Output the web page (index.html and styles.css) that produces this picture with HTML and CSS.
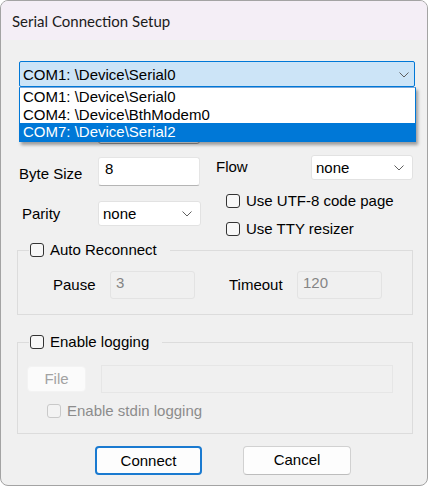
FILE: index.html
```html
<!DOCTYPE html>
<html>
<head>
<meta charset="utf-8">
<link rel="stylesheet" href="styles.css">
</head>
<body>
<div class="window">
  <div class="titlebar">Serial Connection Setup</div>
  <div class="content">
    <div class="combo combo-port">
      <span class="combo-text">COM1: \Device\Serial0</span>
      <svg class="chev" width="10" height="6" viewBox="0 0 10 6"><path d="M0.5 0.5 L5 5 L9.5 0.5" fill="none" stroke="#5f5f5f" stroke-width="1"/></svg>
    </div>
    <ul class="dropdown">
      <li>COM1: \Device\Serial0</li>
      <li>COM4: \Device\BthModem0</li>
      <li class="selected">COM7: \Device\Serial2</li>
    </ul>
    <div class="row-baud">
      <div class="combo combo-baud"></div>
    </div>
    <div class="settings">
      <div class="col-left">
        <div class="field field-byte">
          <span class="label label-byte">Byte Size</span>
          <div class="textbox">8</div>
        </div>
        <div class="field field-parity">
          <span class="label label-parity">Parity</span>
          <div class="combo combo-small">
            <span class="combo-text">none</span>
            <svg class="chev" width="10" height="6" viewBox="0 0 10 6"><path d="M0.5 0.5 L5 5 L9.5 0.5" fill="none" stroke="#5f5f5f" stroke-width="1"/></svg>
          </div>
        </div>
      </div>
      <div class="col-right">
        <div class="field field-flow">
          <span class="label label-flow">Flow</span>
          <div class="combo combo-small combo-flow">
            <span class="combo-text">none</span>
            <svg class="chev" width="10" height="6" viewBox="0 0 10 6"><path d="M0.5 0.5 L5 5 L9.5 0.5" fill="none" stroke="#5f5f5f" stroke-width="1"/></svg>
          </div>
        </div>
        <div class="check check-utf"><span class="box"></span><span>Use UTF-8 code page</span></div>
        <div class="check check-tty"><span class="box"></span><span>Use TTY resizer</span></div>
      </div>
    </div>
    <fieldset class="group group-reconnect">
      <legend><span class="check"><span class="box"></span><span>Auto Reconnect</span></span></legend>
      <div class="pause-row">
        <span class="label label-pause">Pause</span>
        <div class="textbox disabled">3</div>
        <span class="label label-timeout">Timeout</span>
        <div class="textbox disabled">120</div>
      </div>
    </fieldset>
    <fieldset class="group group-logging">
      <legend><span class="check"><span class="box"></span><span>Enable logging</span></span></legend>
      <div class="file-row">
        <div class="btn-file">File</div>
        <div class="path-field"></div>
      </div>
      <div class="check check-stdin disabled"><span class="box"></span><span>Enable stdin logging</span></div>
    </fieldset>
    <div class="buttons">
      <div class="btn btn-primary">Connect</div>
      <div class="btn btn-cancel">Cancel</div>
    </div>
  </div>
</div>
</body>
</html>
```
FILE: styles.css
```css
* { box-sizing: border-box; }
html, body {
  margin: 0;
  padding: 0;
  background: #ffffff;
}
body {
  font-family: "Liberation Sans", Arial, sans-serif;
  font-size: 15px;
  color: #000;
}
.window {
  width: 428px;
  height: 486px;
  border: 1px solid #a3a3a3;
  border-radius: 8px;
  background: #f0f0f0;
  overflow: hidden;
  display: flex;
  flex-direction: column;
}
.titlebar {
  height: 39px;
  background: #f4eef6;
  font-family: "Segoe UI", Lato, "Noto Sans", sans-serif;
  font-size: 15px;
  color: #1b1b1b;
  padding: 11px 0 0 11px;
  line-height: 18px;
}
.content {
  position: relative;
  flex: 1;
  padding: 0 0 0 16px;
}
.combo {
  position: relative;
  height: 26px;
  background: #fff;
  border: 1px solid #e2e2e2;
  border-radius: 3px;
  display: flex;
  align-items: center;
  line-height: 18px;
}
.combo-text { padding-left: 4px; }
.chev {
  position: absolute;
  right: 7px;
  top: 10px;
}
.combo-port {
  margin: 21px 0 0 2px;
  width: 396px;
  background: #cce4f7;
  border: 1px solid #0078d7;
  border-radius: 2px;
}
.combo-port .combo-text { padding-left: 3px; padding-top: 1px; }
.combo-port .chev { right: 5px; top: 10px; }
.dropdown {
  position: absolute;
  top: 47px;
  left: 18px;
  width: 397px;
  height: 55px;
  margin: 0;
  padding: 0;
  list-style: none;
  background: #fff;
  border: 1px solid #0078d7;
  border-top: 1px solid #7aa9dc;
  box-shadow: 2px 3px 3px rgba(0, 0, 0, 0.35);
  z-index: 2;
}
.dropdown li {
  height: 17.7px;
  line-height: 17px;
  padding-left: 3px;
  white-space: nowrap;
}
.dropdown li.selected {
  background: #0078d7;
  color: #fff;
  margin: 0 -1px;
  padding-left: 4px;
}
.row-baud {
  margin-top: 31px;
  padding-left: 81px;
}
.combo-baud { width: 102px; border-color: #9a9a9a; }
.settings {
  display: grid;
  grid-template-columns: 199px 1fr;
  margin-top: 11px;
}
.field {
  display: flex;
  align-items: center;
}
.label { display: inline-block; line-height: 18px; }
.field-byte { margin-top: 2px; }
.label-byte { margin-left: 2px; width: 79px; padding-top: 5px; }
.textbox {
  width: 102px;
  height: 29px;
  background: #fff;
  border: 1px solid #e5e5e5;
  border-bottom: 1px solid #b5b5b5;
  border-radius: 3px;
  padding: 2px 0 0 6px;
  line-height: 18px;
}
.field-parity { margin-top: 15px; }
.label-parity { margin-left: 5px; width: 76px; }
.combo-small { width: 103px; height: 25px; }
.combo-small .combo-text { padding-left: 4px; }
.combo-small .chev { top: 9px; right: 8px; }
.label-flow { width: 95px; padding-bottom: 2px; }
.combo-flow { width: 102px; }
.check {
  display: flex;
  align-items: center;
  height: 16px;
  line-height: 16px;
  white-space: nowrap;
}
.box {
  width: 14px;
  height: 14px;
  border: 1px solid #333333;
  border-radius: 3px;
  background: #f7f7f7;
  margin-right: 6px;
  flex: none;
}
.check-utf { margin: 13px 0 0 10px; }
.check-tty { margin: 12px 0 0 10px; }
.group {
  width: 396px;
  margin: 0;
  padding: 0;
  border: 1px solid #dcdcdc;
  min-width: 0;
}
.group legend {
  margin-left: 11px;
  padding: 0 13px 0 1px;
  height: 16px;
}
.group-reconnect { margin-top: 5px; padding-bottom: 15px; }
.pause-row {
  display: flex;
  align-items: center;
  margin-top: 13px;
  padding-left: 35px;
}
.label-pause { width: 57px; }
.label-timeout { width: 68px; margin-left: 34px; }
.textbox.disabled {
  width: 85px;
  height: 28px;
  background: #f0f0f0;
  border: 1px solid #e3e3e3;
  color: #858585;
  padding: 2px 0 0 5px;
}
.group-logging { margin-top: 19px; padding-bottom: 14px; }
.file-row {
  display: flex;
  align-items: center;
  margin-top: 15px;
  padding-left: 9px;
}
.btn-file {
  width: 59px;
  height: 26px;
  background: #fbfbfb;
  border: 1px solid #f3f3f3;
  border-radius: 4px;
  color: #a2a2a2;
  text-align: center;
  line-height: 24px;
}
.path-field {
  width: 292px;
  height: 28px;
  margin-left: 15px;
  border: 1px solid #e6e6e6;
  background: #f0f0f0;
}
.check-stdin { margin: 10px 0 0 29px; color: #8c8c8c; }
.check-stdin .box { border-color: #c9c9c9; background: #f3f3f3; }
.buttons {
  display: flex;
  gap: 41px;
  margin: 12px 0 0 78px;
}
.btn {
  height: 29px;
  border-radius: 4px;
  text-align: center;
  line-height: 26px;
  background: #fdfdfd;
}
.btn-primary {
  width: 107px;
  border: 2px solid #1a7ad0;
  line-height: 25px;
}
.btn-cancel {
  width: 108px;
  border: 1px solid #d1d1d1;
  border-bottom-color: #bdbdbd;
}
```
